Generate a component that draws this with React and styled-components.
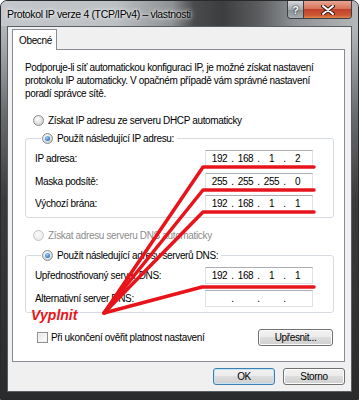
import React from 'react';
import styled, { createGlobalStyle, css } from 'styled-components';

const ipv4 = [
  { label: 'IP adresa:', value: ['192', '168', '1', '2'] },
  { label: 'Maska podsítě:', value: ['255', '255', '255', '0'] },
  { label: 'Výchozí brána:', value: ['192', '168', '1', '1'] }
];

const dns = [
  { label: 'Upřednostňovaný server DNS:', value: ['192', '168', '1', '1'] },
  { label: 'Alternativní server DNS:', value: ['', '', '', ''] }
];

const IpField = ({ value }) => (
  <IpBox>
    {value.map((octet, i) => (
      <React.Fragment key={i}>
        {i > 0 && <Dot>.</Dot>}
        <Octet>{octet}</Octet>
      </React.Fragment>
    ))}
  </IpBox>
);

const App = () => (
  <Stage>
    <GlobalStyle />
    <Window>
      <TitleBar>
        <Title>Protokol IP verze 4 (TCP/IPv4) – vlastnosti</Title>
        <CaptionButtons>
          <HelpButton>?</HelpButton>
          <CloseButton>
            <svg width="14" height="10" viewBox="0 0 14 10">
              <path d="M2 1 L12 9 M12 1 L2 9" stroke="#3a1a14" strokeWidth="4" strokeLinecap="round" />
              <path d="M2 1 L12 9 M12 1 L2 9" stroke="#fff" strokeWidth="2" strokeLinecap="round" />
            </svg>
          </CloseButton>
        </CaptionButtons>
      </TitleBar>

      <Client>
        <TabStrip>
          <Tab>Obecné</Tab>
        </TabStrip>
        <TabPanel>
          <Intro>
            Podporuje-li síť automatickou konfiguraci IP, je možné získat nastavení
            protokolu IP automaticky. V opačném případě vám správné nastavení
            poradí správce sítě.
          </Intro>

          <OptionRow $top={13}>
            <Radio />
            Získat IP adresu ze serveru DHCP automaticky
          </OptionRow>

          <Group $top={4}>
            <Legend>
              <Radio $checked />
              Použít následující IP adresu:
            </Legend>
            <Fields $gap={5.5}>
              {ipv4.map(f => (
                <FieldRow key={f.label}>
                  <span>{f.label}</span>
                  <IpField value={f.value} />
                </FieldRow>
              ))}
            </Fields>
          </Group>

          <OptionRow $top={10} $disabled>
            <Radio $disabled />
            Získat adresu serveru DNS automaticky
          </OptionRow>

          <Group $top={6}>
            <Legend>
              <Radio $checked />
              Použít následující adresy serverů DNS:
            </Legend>
            <Fields $gap={6}>
              {dns.map(f => (
                <FieldRow key={f.label}>
                  <span>{f.label}</span>
                  <IpField value={f.value} />
                </FieldRow>
              ))}
            </Fields>
          </Group>

          <BottomRow>
            <CheckLabel>
              <Checkbox />
              Při ukončení ověřit platnost nastavení
            </CheckLabel>
            <Button $width={75}>Upřesnit...</Button>
          </BottomRow>
        </TabPanel>

        <DialogButtons>
          <Button $width={62} $default>OK</Button>
          <Button $width={62}>Storno</Button>
        </DialogButtons>
      </Client>
    </Window>

    {/* red hand-drawn annotation lying over the dialog */}
    <Annotation width="359" height="400" viewBox="0 0 359 400">
      <g stroke="#e8141b" strokeWidth="3.5" fill="none" strokeLinejoin="round" strokeLinecap="round">
        <path d="M104 313 L203 167 L314 167" />
        <path d="M104 313 L203 190 L314 190" />
        <path d="M104 313 L203 212 L314 212" />
        <path d="M104 313 L202 287 L314 287" />
      </g>
    </Annotation>
    <Note>Vyplnit</Note>
  </Stage>
);

export default App;

/** styles */

const GlobalStyle = createGlobalStyle`
  body {
    margin: 0;
    background: #fff;
  }
  * {
    box-sizing: border-box;
  }
`;

const Stage = styled.div`
  position: relative;
  width: 359px;
  height: 400px;
  font-family: "Liberation Sans", Arial, sans-serif;
  font-size: 10px;
  letter-spacing: -0.35px;
  color: #000;
`;

const Window = styled.div`
  width: 359px;
  height: 400px;
  display: flex;
  flex-direction: column;
  padding: 0 6px 7px;
  border: 1px solid #2a2a2a;
  border-radius: 7px 7px 0 0;
  overflow: hidden;
  background: linear-gradient(180deg, #c2c6ca 0%, #a9adb1 10%, #6a6d70 28%, #3a3b3c 50%, #2a2b2c 100%);
`;

const TitleBar = styled.div`
  display: flex;
  align-items: flex-start;
  height: 25px;
  margin: 0 -6px;
  padding: 0 6px;
  background: linear-gradient(90deg, #c4c8cc 0%, #bcc0c3 32%, #8e9194 48%, #4a4b4d 54%, #3c3d3e 62%, #5a5c5e 72%, #8e9194 82%, #b5b8bb 100%);
`;

const Title = styled.div`
  line-height: 26px;
  font-size: 10.5px;
  color: #000;
  text-shadow: 0 0 6px rgba(255, 255, 255, 0.9), 0 0 3px rgba(255, 255, 255, 0.9);
`;

const CaptionButtons = styled.div`
  margin-left: auto;
  display: flex;
  height: 18px;
  border: 1px solid #3c3f44;
  border-top: none;
  border-radius: 0 0 4px 4px;
  overflow: hidden;
`;

const HelpButton = styled.div`
  width: 16px;
  display: flex;
  align-items: center;
  justify-content: center;
  font-weight: bold;
  font-size: 11px;
  color: #fff;
  text-shadow: 0 0 2px #222, 0 0 1px #222;
  border-right: 1px solid #3c3f44;
  background: linear-gradient(180deg, #d4d7da 0%, #a7abaf 50%, #8a8f94 51%, #a9adb2 100%);
`;

const CloseButton = styled.div`
  width: 47px;
  display: flex;
  align-items: center;
  justify-content: center;
  background: linear-gradient(180deg, #e8a593 0%, #d8735b 45%, #c1412a 50%, #cf5a33 85%, #e0894f 100%);
`;

const Client = styled.div`
  flex: 1;
  display: flex;
  flex-direction: column;
  padding: 2px 6px 6px 4px;
  background: #f0f0f0;
  border: 1px solid #5a5e62;
`;

const TabStrip = styled.div`
  display: flex;
  height: 20px;
`;

const Tab = styled.div`
  position: relative;
  z-index: 1;
  width: 45px;
  height: 21px;
  padding-left: 6px;
  line-height: 22px;
  background: #fff;
  border: 1px solid #898c95;
  border-bottom: none;
`;

const TabPanel = styled.div`
  flex: 1;
  display: flex;
  flex-direction: column;
  background: #fff;
  border: 1px solid #898c95;
`;

const Intro = styled.p`
  margin: 0;
  padding: 11px 8px 0 12px;
  line-height: 13px;
`;

const OptionRow = styled.div`
  display: flex;
  align-items: center;
  gap: 4px;
  height: 14px;
  margin: ${p => p.$top}px 0 0 20px;
  color: ${p => (p.$disabled ? '#8d8d8d' : '#000')};
`;

const Radio = styled.span`
  position: relative;
  flex: none;
  width: 11px;
  height: 11px;
  border-radius: 50%;
  border: 1px solid ${p => (p.$disabled ? '#c6c6c6' : '#8a8c8e')};
  background: ${p =>
    p.$disabled
      ? 'radial-gradient(circle at 40% 35%, #fafafa, #e6e6e6)'
      : 'radial-gradient(circle at 40% 35%, #ffffff, #d6d6d6 70%, #c4c4c4)'};

  ${p =>
    p.$checked &&
    css`
      &::after {
        content: '';
        position: absolute;
        left: 2px;
        top: 2px;
        width: 5px;
        height: 5px;
        border-radius: 50%;
        background: radial-gradient(circle at 40% 35%, #9fd0f5, #3f86c8 60%, #1d5fa3);
      }
    `}
`;

const Group = styled.fieldset`
  min-width: 0;
  margin: ${p => p.$top}px 10px 0 12px;
  padding: 5px 20px 5px 9px;
  border: 1px solid #d5dbe0;
  border-radius: 3px;
`;

const Legend = styled.legend`
  display: flex;
  align-items: center;
  gap: 4px;
  height: 14px;
  margin-left: 6px;
  padding: 0 3px 0 1px;
`;

const Fields = styled.div`
  display: grid;
  row-gap: ${p => p.$gap}px;
`;

const FieldRow = styled.div`
  display: grid;
  grid-template-columns: 1fr 108px;
  align-items: center;
  height: 17px;
`;

const IpBox = styled.div`
  display: flex;
  align-items: center;
  height: 17px;
  padding: 0 1px 0 3px;
  background: #fff;
  border: 1px solid #dfe3e8;
  border-top-color: #abadb3;
`;

const Octet = styled.span`
  width: 21px;
  text-align: center;
`;

const Dot = styled.span`
  width: 5px;
  text-align: center;
`;

const BottomRow = styled.div`
  display: flex;
  align-items: center;
  justify-content: space-between;
  margin: 16px 11px 0 24px;
`;

const CheckLabel = styled.label`
  display: flex;
  align-items: center;
  gap: 3px;
`;

const Checkbox = styled.span`
  width: 11px;
  height: 11px;
  border: 1px solid #8e8f8f;
  background: linear-gradient(135deg, #e0e0e0, #f6f6f6 60%, #ffffff);
  box-shadow: inset 0 0 0 1px #f4f4f4;
`;

const Button = styled.div`
  width: ${p => p.$width}px;
  height: 17px;
  display: flex;
  align-items: center;
  justify-content: center;
  border: 1px solid ${p => (p.$default ? '#3c7fb1' : '#707070')};
  border-radius: 3px;
  background: linear-gradient(180deg, #f2f2f2 0%, #ebebeb 49%, #dddddd 50%, #cfcfcf 100%);
  box-shadow: inset 0 0 0 1px ${p => (p.$default ? '#c2e4f6' : '#fcfcfc')};
`;

const DialogButtons = styled.div`
  display: flex;
  justify-content: flex-end;
  gap: 8px;
  margin-top: 6px;
`;

const Annotation = styled.svg`
  position: absolute;
  left: 0;
  top: 0;
  pointer-events: none;
`;

const Note = styled.div`
  position: absolute;
  left: 31px;
  top: 307px;
  font-size: 14px;
  font-weight: bold;
  font-style: italic;
  letter-spacing: 0;
  color: #e8141b;
`;
